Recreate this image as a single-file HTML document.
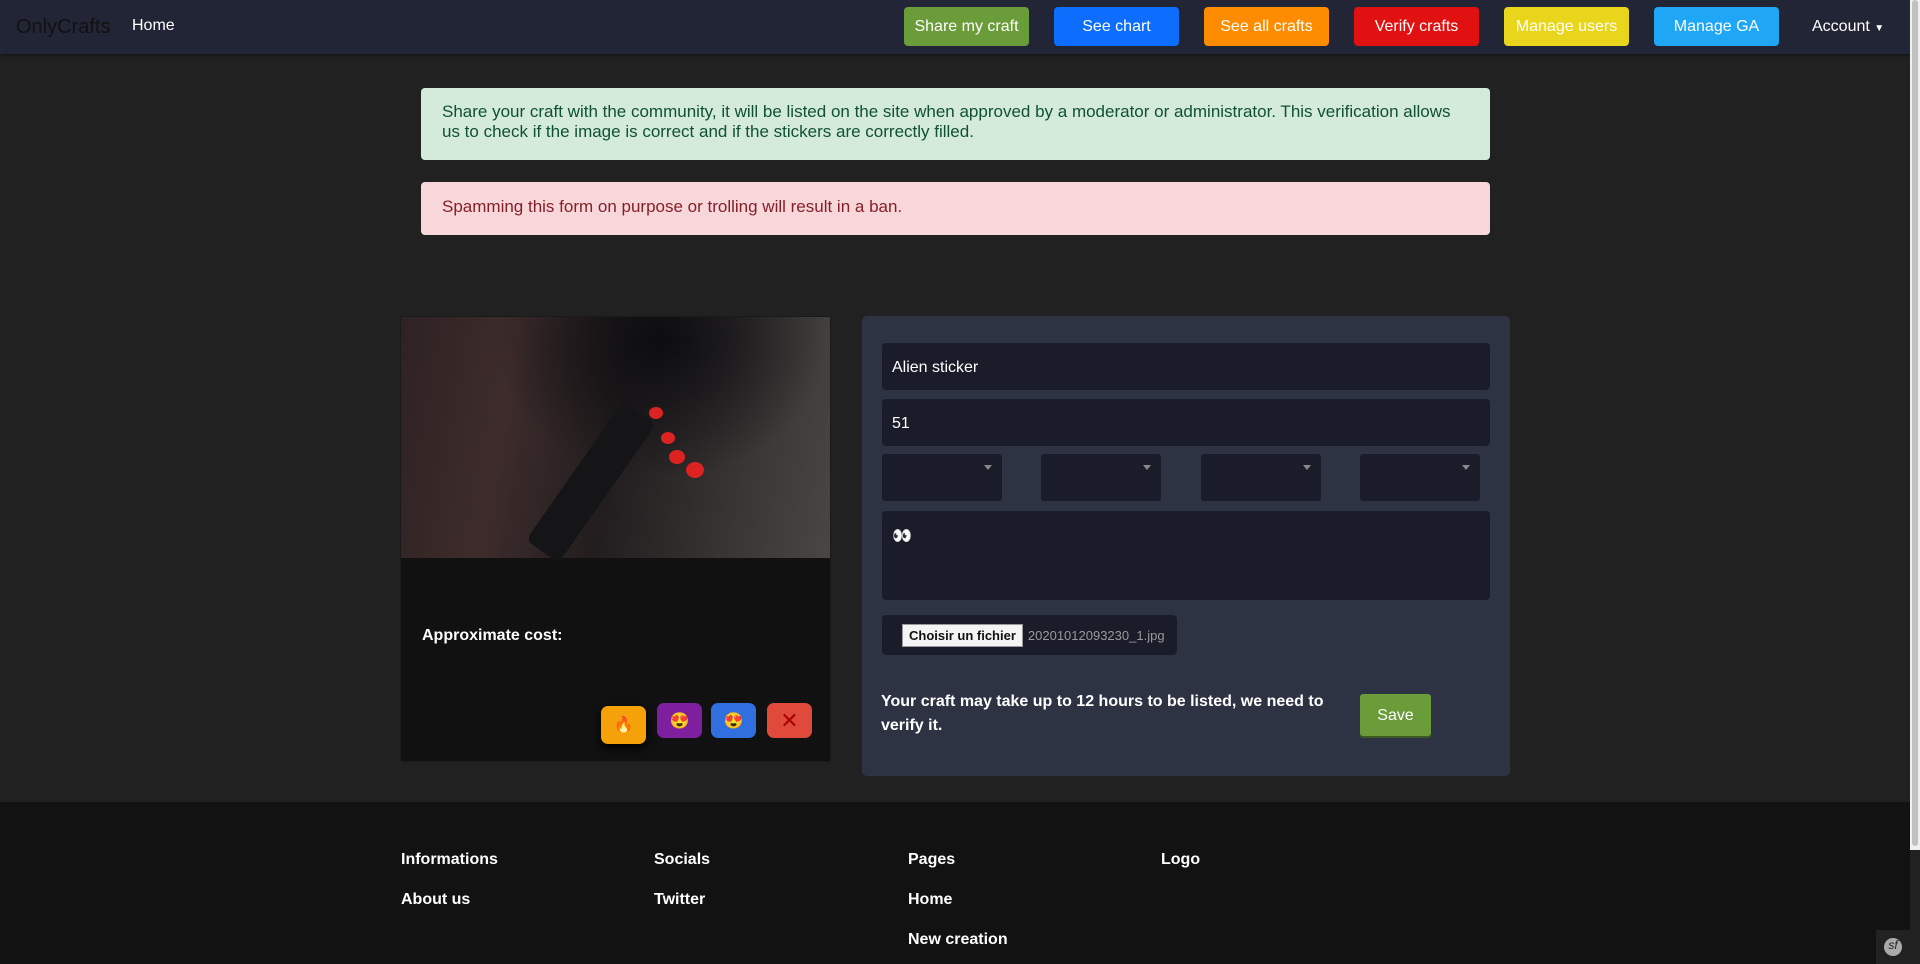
<!DOCTYPE html>
<html><head><meta charset="utf-8"><style>
*{box-sizing:border-box;margin:0;padding:0}
body{width:1920px;height:964px;overflow:hidden;background:#212121;font-family:"Liberation Sans",sans-serif;position:relative;color:#fff}
.a{position:absolute}
nav{position:absolute;left:0;top:0;width:1910px;height:54px;background:#222536;box-shadow:0 2px 4px rgba(0,0,0,.4)}
.btn{position:absolute;top:7px;height:39px;width:125px;border-radius:4px;color:#fff;font-size:16px;display:flex;align-items:center;justify-content:center}
.alert{position:absolute;left:421px;width:1069px;border-radius:4px;font-size:17px;line-height:20px;padding:14px 21px}
.inp{position:absolute;background:#1b1c29;border-radius:4px;color:#fff;font-size:16px;padding-left:10px;display:flex;align-items:center}
.sel{position:absolute;top:454px;width:120px;height:47px;background:#1b1c29;border-radius:3px}
.sel:after{content:"";position:absolute;right:10px;top:11px;border:4px solid transparent;border-top:5px solid #888}
.emo{position:absolute;top:703px;width:45px;height:35px;border-radius:7px;display:flex;align-items:center;justify-content:center;font-size:16px}
.f{position:absolute;font-weight:bold;font-size:16px}
</style></head><body>
<nav>
<div class="a" style="left:16px;top:16px;font-size:20px;color:#111">OnlyCrafts</div>
<div class="a" style="left:132px;top:17px;font-size:16px">Home</div>
<div class="btn" style="left:904px;background:#6a9c3a">Share my craft</div>
<div class="btn" style="left:1054px;background:#0d6efd">See chart</div>
<div class="btn" style="left:1204px;background:#fd8c00">See all crafts</div>
<div class="btn" style="left:1354px;background:#e21111">Verify crafts</div>
<div class="btn" style="left:1504px;background:#e9d51c">Manage users</div>
<div class="btn" style="left:1654px;background:#1fa6f4">Manage GA</div>
<div class="a" style="left:1812px;top:18px;font-size:16px">Account <span style="font-size:10px">▼</span></div>
</nav>
<div class="a" style="left:1910px;top:0;width:10px;height:850px;background:#f0f0f0"></div>
<div class="a" style="left:1912px;top:0;width:6px;height:846px;background:#c1c1c1;border-radius:3px"></div>

<div class="alert" style="top:88px;height:72px;background:#d4ebd9;color:#0f5132">Share your craft with the community, it will be listed on the site when approved by a moderator or administrator. This verification allows us to check if the image is correct and if the stickers are correctly filled.</div>
<div class="alert" style="top:182px;height:53px;background:#f8d7da;color:#842029;padding-top:15px">Spamming this form on purpose or trolling will result in a ban.</div>

<div class="a" style="left:400px;top:316px;width:431px;height:446px;background:#111;border:1px solid #1a1a1a;border-radius:3px;overflow:hidden">
<div class="a" style="left:0;top:0;width:431px;height:241px;background:radial-gradient(ellipse at 60% 10%,#0d0d10 0%,transparent 45%),linear-gradient(100deg,#2e2222 0%,#3e2c2c 25%,#221d1e 50%,#3a3736 80%,#4a4644 100%)"></div>
<div class="a" style="left:170px;top:80px;width:40px;height:170px;background:#151518;transform:rotate(35deg);border-radius:8px"></div>
<div class="a" style="left:248px;top:90px;width:14px;height:12px;background:#d22;border-radius:50%"></div>
<div class="a" style="left:260px;top:115px;width:14px;height:12px;background:#d22;border-radius:50%"></div>
<div class="a" style="left:268px;top:133px;width:16px;height:14px;background:#d22;border-radius:50%"></div>
<div class="a" style="left:285px;top:145px;width:18px;height:16px;background:#d22;border-radius:50%"></div>
<div class="a" style="left:21px;top:310px;font-size:16px;font-weight:bold">Approximate cost:</div>
</div>
<div class="emo" style="left:601px;top:706px;background:#f5a20a;height:38px;box-shadow:0 4px 10px #000">🔥</div>
<div class="emo" style="left:657px;background:#7e1fa0">😍</div>
<div class="emo" style="left:711px;background:#2f6fe0">😍</div>
<div class="emo" style="left:767px;background:#e04a3a;color:#a00;font-size:22px">✕</div>

<div class="a" style="left:862px;top:316px;width:648px;height:460px;background:#2e3344;border-radius:5px"></div>
<div class="inp" style="left:882px;top:343px;width:608px;height:47px;padding-top:2px">Alien sticker</div>
<div class="inp" style="left:882px;top:399px;width:608px;height:47px;padding-top:2px">51</div>
<div class="sel" style="left:882px"></div>
<div class="sel" style="left:1041px"></div>
<div class="sel" style="left:1201px"></div>
<div class="sel" style="left:1360px"></div>
<div class="inp" style="left:882px;top:511px;width:608px;height:89px;align-items:flex-start;padding-top:15px">👀</div>
<div class="inp" style="left:882px;top:615px;width:295px;height:40px;padding-left:20px;font-size:13px;color:#999">
<span style="background:#f4f4f4;color:#111;border:1px solid #999;padding:3px 6px;margin-right:5px;font-weight:bold">Choisir un fichier</span>20201012093230_1.jpg</div>
<div class="a" style="left:881px;top:690px;width:460px;font-size:16px;font-weight:bold;line-height:24px">Your craft may take up to 12 hours to be listed, we need to verify it.</div>
<div class="a" style="left:1360px;top:694px;width:71px;height:42px;background:#6a9c3a;border-radius:3px;font-size:16px;display:flex;align-items:center;justify-content:center;box-shadow:0 2px 0 #3b5a22;padding-top:2px">Save</div>

<div class="a" style="left:0;top:802px;width:1910px;height:162px;background:#121212"></div>
<div class="f" style="left:401px;top:851px">Informations</div>
<div class="f" style="left:654px;top:851px">Socials</div>
<div class="f" style="left:908px;top:851px">Pages</div>
<div class="f" style="left:1161px;top:851px">Logo</div>
<div class="f" style="left:401px;top:891px">About us</div>
<div class="f" style="left:654px;top:891px">Twitter</div>
<div class="f" style="left:908px;top:891px">Home</div>
<div class="f" style="left:908px;top:931px">New creation</div>
<div class="a" style="left:1876px;top:930px;width:34px;height:34px;background:#222"><div style="margin:8px 0 0 8px;width:18px;height:18px;border-radius:50%;background:#aaa;color:#222;font-size:12px;text-align:center;font-style:italic">sf</div></div>
</body></html>
